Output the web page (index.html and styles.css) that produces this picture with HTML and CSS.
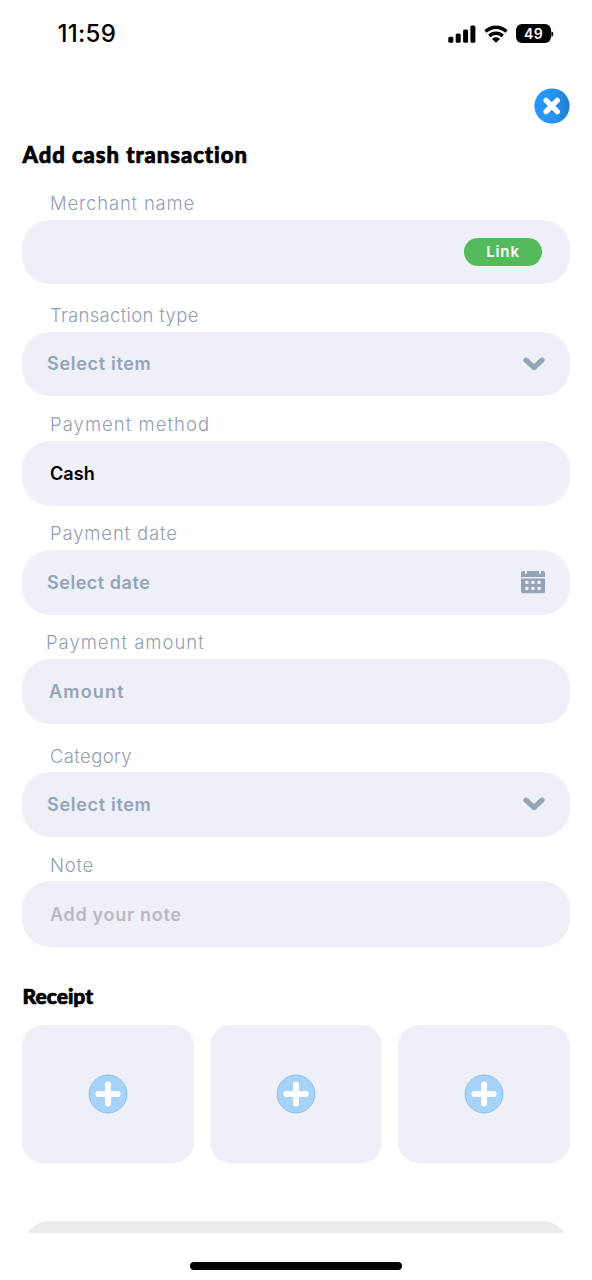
FILE: index.html
```html
<!DOCTYPE html>
<html lang="en">
<head>
<meta charset="utf-8">
<meta name="viewport" content="width=device-width, initial-scale=1">
<title>Add cash transaction</title>
<link rel="stylesheet" href="styles.css">
</head>
<body>
<div class="screen">
  <header class="status">
    <span class="clock">11:59</span>
    <div class="indicators">
      <svg class="signal" width="28" height="18" viewBox="0 0 28 18"><rect x="0.3" y="11.7" width="5" height="6" rx="1.5"/><rect x="7.7" y="8.4" width="5" height="9.3" rx="1.5"/><rect x="15.1" y="4.4" width="5" height="13.3" rx="1.5"/><rect x="22.4" y="0.4" width="5" height="17.3" rx="1.5"/></svg>
      <svg class="wifi" width="24" height="18" viewBox="0 0 24 18"><g fill="none" stroke="#000" stroke-width="3.5"><path d="M1.5 6.5C7.5.7 16.5.7 22.5 6.5"/><path d="M5.3 11C9.2 7.3 14.8 7.3 18.7 11"/></g><path d="M8 14c2.2-2.2 5.8-2.2 8 0l-4 3.8z"/></svg>
      <div class="battery"><span class="level">49</span><svg class="tip" width="3" height="8" viewBox="0 0 3 8"><path d="M.4 1.2C3 2 3 6 .4 6.8z"/></svg></div>
    </div>
  </header>

  <div class="toolbar">
    <button class="close" aria-label="Close"><svg width="36" height="36" viewBox="0 0 36 36"><defs><linearGradient id="blue"><stop offset="0" stop-color="#2598fa"/><stop offset=".55" stop-color="#2494ee"/><stop offset="1" stop-color="#227ccb"/></linearGradient></defs><circle cx="18" cy="18" r="17.6" fill="url(#blue)"/><path d="M12.1 12.4l11.2 11.2M23.3 12.4L12.1 23.6" stroke="#fff" stroke-width="5.4" stroke-linecap="round"/></svg></button>
  </div>

  <h1 class="heading title">Add cash transaction</h1>

  <form class="form">
    <div class="field merchant">
      <label class="label">Merchant name</label>
      <div class="box"><span></span><span class="link">Link</span></div>
    </div>
    <div class="field type">
      <label class="label">Transaction type</label>
      <div class="box select"><span class="value item">Select item</span><svg class="chevron" width="22" height="14" viewBox="0 0 22 14"><path d="M3 3.2l8 7.3 8-7.3"/></svg></div>
    </div>
    <div class="field method">
      <label class="label">Payment method</label>
      <div class="box"><span class="value cash">Cash</span></div>
    </div>
    <div class="field date">
      <label class="label">Payment date</label>
      <div class="box select"><span class="value day">Select date</span><svg class="calendar" width="24" height="24" viewBox="0 0 24 24"><path d="M0 7V3Q0 1 2 1h2v2q0 1 1 1t1-1V1h12v2q0 1 1 1t1-1V1h2q2 0 2 2v4zM0 8.5h24V21q0 2.3-2.3 2.3H2.3Q0 23.3 0 21z"/><g class="days"><rect x="4.2" y="10.7" width="3.3" height="3.3" rx=".7"/><rect x="10.3" y="10.7" width="3.3" height="3.3" rx=".7"/><rect x="16.4" y="10.7" width="3.3" height="3.3" rx=".7"/><rect x="4.2" y="16.7" width="3.3" height="3.3" rx=".7"/><rect x="10.3" y="16.7" width="3.3" height="3.3" rx=".7"/><rect x="16.4" y="16.7" width="3.3" height="3.3" rx=".7"/></g></svg></div>
    </div>
    <div class="field amount">
      <label class="label">Payment amount</label>
      <div class="box"><span class="value sum">Amount</span></div>
    </div>
    <div class="field category">
      <label class="label">Category</label>
      <div class="box select"><span class="value item">Select item</span><svg class="chevron" width="22" height="14" viewBox="0 0 22 14"><path d="M3 3.2l8 7.3 8-7.3"/></svg></div>
    </div>
    <div class="field note">
      <label class="label">Note</label>
      <div class="box"><span class="value hint">Add your note</span></div>
    </div>
  </form>

  <h2 class="heading receipt">Receipt</h2>
  <div class="uploads">
    <div class="upload"><svg width="40" height="40" viewBox="0 0 40 40"><circle cx="20" cy="20" r="18.9"/><path d="M20 10.4v19.2M10.4 20h19.2"/></svg></div>
    <div class="upload"><svg width="40" height="40" viewBox="0 0 40 40"><circle cx="20" cy="20" r="18.9"/><path d="M20 10.4v19.2M10.4 20h19.2"/></svg></div>
    <div class="upload"><svg width="40" height="40" viewBox="0 0 40 40"><circle cx="20" cy="20" r="18.9"/><path d="M20 10.4v19.2M10.4 20h19.2"/></svg></div>
  </div>

  <div class="submit-clip"><div class="submit"></div></div>
  <div class="home"></div>
</div>
</body>
</html>
```
FILE: styles.css
```css
* { box-sizing: border-box; }
body { margin: 0; background: #fff; font-family: Inter, "Liberation Sans", sans-serif; }
svg { display: block; }
.screen { width: 592px; height: 1280px; overflow: hidden; padding: 0 22px; display: flex; flex-direction: column; }
.screen > * { flex-shrink: 0; }

.status { height: 67px; display: flex; align-items: center; justify-content: space-between; padding: 0 16px 0 35.5px; }
.clock { font-size: 24px; font-weight: 500; letter-spacing: 0.3px; }
.indicators { display: flex; align-items: center; }
.wifi { margin-left: 8px; }
.battery { display: flex; align-items: center; margin-left: 8px; }
.level { width: 35px; height: 19px; border-radius: 6px; background: #000; color: #fff; font-size: 14px; line-height: 19px; font-weight: 600; text-align: center; letter-spacing: 0.4px; }

.toolbar { height: 57px; padding-top: 21px; display: flex; justify-content: flex-end; }
.close { padding: 0; border: 0; background: none; width: 36px; height: 36px; }

.heading { margin: 0; padding-left: 0.5px; font-family: Lato, sans-serif; font-weight: 900; font-size: 22px; line-height: 30px; color: #000; white-space: nowrap; -webkit-text-stroke: 0.7px #000; }
.title { margin-top: 16px; letter-spacing: 0.97px; }

.form { margin-top: 21.5px; }
.label { display: block; height: 28px; padding-left: 28px; font-size: 18.5px; font-weight: 300; line-height: 22px; color: #95a0b4; white-space: nowrap; }
.box { height: 64.5px; border-radius: 28px; background: #eeeff7; display: flex; align-items: center; justify-content: space-between; padding: 0 28px; }
.select { padding: 0 25px; }
.value { padding-top: 1px; font-size: 18px; font-weight: 600; line-height: 24px; color: #94a3b8; }
.link { width: 78px; height: 28px; border-radius: 14px; background: #53bb5b; color: #fff; font-size: 15px; font-weight: 600; line-height: 28px; text-align: center; letter-spacing: 0.9px; }
.merchant { letter-spacing: 0.8px; }
.type { margin-top: 19.5px; letter-spacing: 0.33px; }
.method { margin-top: 17px; letter-spacing: 1.04px; }
.date { margin-top: 16.5px; letter-spacing: 0.85px; }
.amount { margin-top: 16.5px; letter-spacing: 0.99px; }
.category { margin-top: 20.5px; letter-spacing: 0.37px; }
.note { margin-top: 16px; letter-spacing: 0.7px; }
.amount .label { padding-left: 24px; }
.amount .box { padding: 0 27px; }
.category .label, .note .label { line-height: 24px; }
.note .box { height: 66px; padding-top: 1px; }
.item { letter-spacing: 0.7px; }
.day { letter-spacing: 0.53px; }
.cash { color: #000; letter-spacing: 0.1px; }
.sum { letter-spacing: 1.2px; }
.hint { color: #b8b9c5; letter-spacing: 0.7px; }
.chevron path { fill: none; stroke: #94a3b8; stroke-width: 5.2; stroke-linecap: round; stroke-linejoin: round; }
.calendar { fill: #94a3b8; }
.days { fill: #eeeff7; }

.receipt { margin-top: 34px; font-size: 21px; letter-spacing: 0; }
.uploads { margin-top: 14.5px; display: grid; grid-template-columns: repeat(3, 1fr); gap: 16.5px; }
.upload { height: 138px; border-radius: 21px; background: #eeeff7; display: flex; align-items: center; justify-content: center; }
.upload circle { fill: #a8d3f8; stroke: #86bfee; stroke-width: 1; }
.upload path { stroke: #fff; stroke-width: 6; stroke-linecap: round; }

.submit-clip { margin-top: 58px; height: 12px; overflow: hidden; }
.submit { height: 65px; border-radius: 28px; background: #ececec; }
.home { width: 212px; height: 8px; margin: 28.5px auto 0; border-radius: 4px; background: #000; }
```
